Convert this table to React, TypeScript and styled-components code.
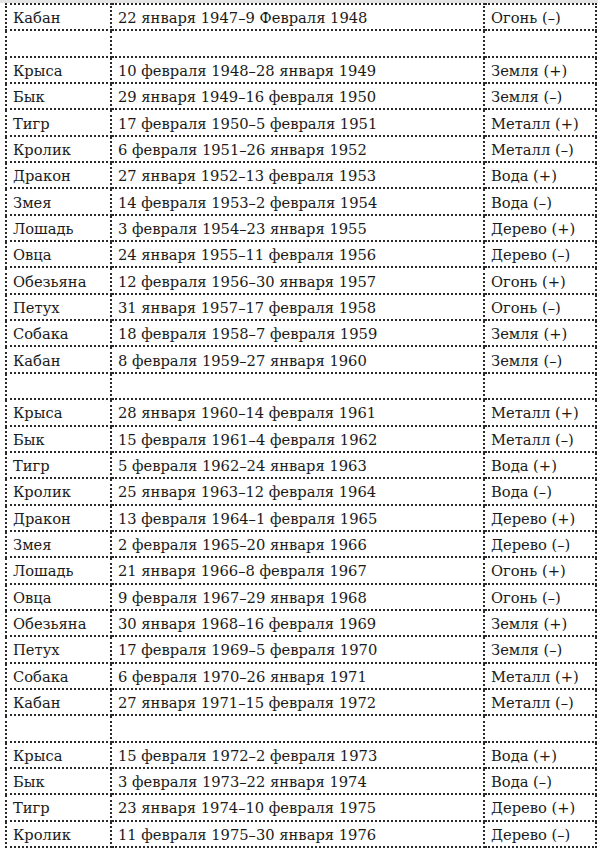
import React from 'react';
import styled, { createGlobalStyle } from 'styled-components';

type Row = [string, string, string] | null;

const rows: Row[] = [
  ['Кабан', '22 января 1947–9 Февраля 1948', 'Огонь (–)'],
  null,
  ['Крыса', '10 февраля 1948–28 января 1949', 'Земля (+)'],
  ['Бык', '29 января 1949–16 февраля 1950', 'Земля (–)'],
  ['Тигр', '17 февраля 1950–5 февраля 1951', 'Металл (+)'],
  ['Кролик', '6 февраля 1951–26 января 1952', 'Металл (–)'],
  ['Дракон', '27 января 1952–13 февраля 1953', 'Вода (+)'],
  ['Змея', '14 февраля 1953–2 февраля 1954', 'Вода (–)'],
  ['Лошадь', '3 февраля 1954–23 января 1955', 'Дерево (+)'],
  ['Овца', '24 января 1955–11 февраля 1956', 'Дерево (–)'],
  ['Обезьяна', '12 февраля 1956–30 января 1957', 'Огонь (+)'],
  ['Петух', '31 января 1957–17 февраля 1958', 'Огонь (–)'],
  ['Собака', '18 февраля 1958–7 февраля 1959', 'Земля (+)'],
  ['Кабан', '8 февраля 1959–27 января 1960', 'Земля (–)'],
  null,
  ['Крыса', '28 января 1960–14 февраля 1961', 'Металл (+)'],
  ['Бык', '15 февраля 1961–4 февраля 1962', 'Металл (–)'],
  ['Тигр', '5 февраля 1962–24 января 1963', 'Вода (+)'],
  ['Кролик', '25 января 1963–12 февраля 1964', 'Вода (–)'],
  ['Дракон', '13 февраля 1964–1 февраля 1965', 'Дерево (+)'],
  ['Змея', '2 февраля 1965–20 января 1966', 'Дерево (–)'],
  ['Лошадь', '21 января 1966–8 февраля 1967', 'Огонь (+)'],
  ['Овца', '9 февраля 1967–29 января 1968', 'Огонь (–)'],
  ['Обезьяна', '30 января 1968–16 февраля 1969', 'Земля (+)'],
  ['Петух', '17 февраля 1969–5 февраля 1970', 'Земля (–)'],
  ['Собака', '6 февраля 1970–26 января 1971', 'Металл (+)'],
  ['Кабан', '27 января 1971–15 февраля 1972', 'Металл (–)'],
  null,
  ['Крыса', '15 февраля 1972–2 февраля 1973', 'Вода (+)'],
  ['Бык', '3 февраля 1973–22 января 1974', 'Вода (–)'],
  ['Тигр', '23 января 1974–10 февраля 1975', 'Дерево (+)'],
  ['Кролик', '11 февраля 1975–30 января 1976', 'Дерево (–)'],
];

export default function App() {
  return (
    <Page>
      <GlobalStyle />
      <TopStrip />
      <Table>
        <colgroup>
          <col style={{ width: 105 }} />
          <col style={{ width: 373 }} />
          <col style={{ width: 112 }} />
        </colgroup>
        <tbody>
          {rows.map((r, i) => (
            <Tr key={i}>
              <Td>{r ? r[0] : ''}</Td>
              <Td>{r ? r[1] : ''}</Td>
              <Td>{r ? r[2] : ''}</Td>
            </Tr>
          ))}
        </tbody>
      </Table>
    </Page>
  );
}

const GlobalStyle = createGlobalStyle`
  html, body {
    margin: 0;
    padding: 0;
    background: #ffffff;
  }
`;

const Page = styled.div`
  width: 598px;
  height: 857px;
  overflow: hidden;
`;

const TopStrip = styled.div`
  height: 3px;
  background: #e4e4e4;
`;

const Table = styled.table`
  margin-left: 5px;
  width: 590px;
  border-collapse: collapse;
  table-layout: fixed;
`;

const Tr = styled.tr`
  height: 26.35px;
`;

const Td = styled.td`
  border: 2px dotted #2a2a2a;
  padding: 2px 0 0 6px;
  font-family: 'DejaVu Serif', serif;
  font-size: 14.7px;
  line-height: 20px;
  color: #1a1a1a;
  white-space: nowrap;
  vertical-align: middle;
`;
